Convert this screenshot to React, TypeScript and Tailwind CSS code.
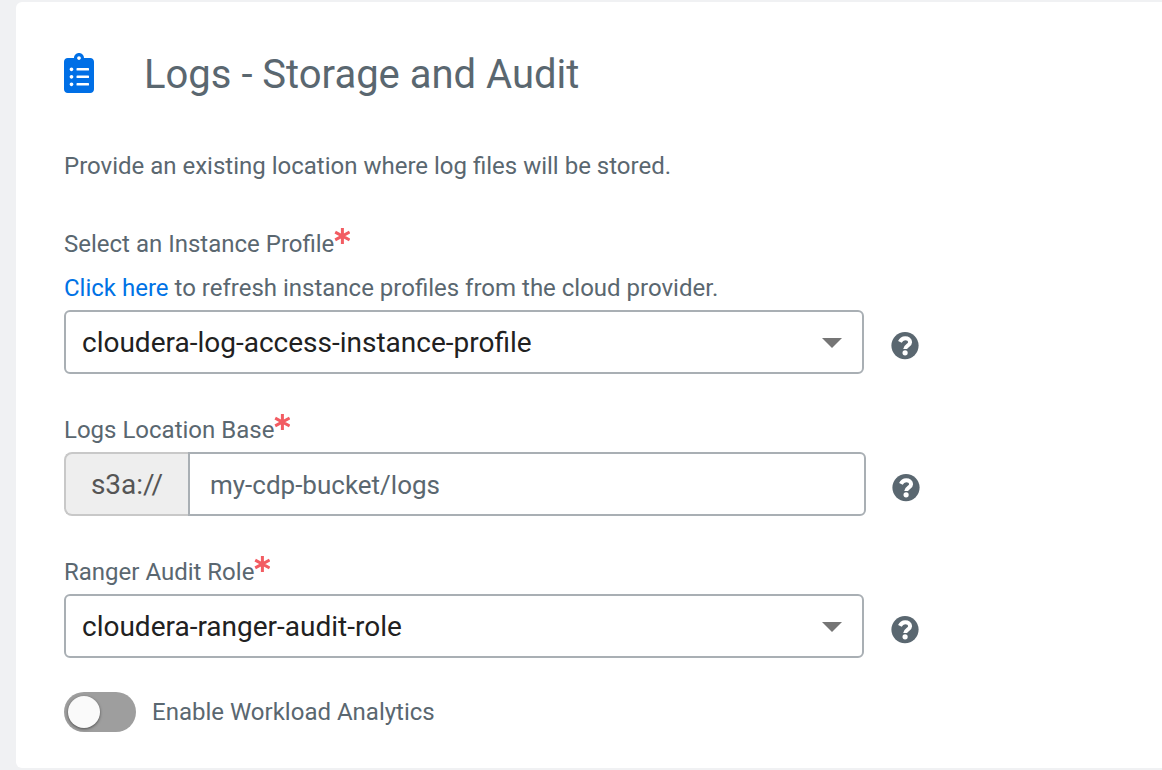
import { FaClipboardList } from 'react-icons/fa';

function Required() {
  return (
    <svg className="h-4 w-4 shrink-0" viewBox="0 0 16 16" fill="none" stroke="#f25c62" strokeWidth="3" role="img" aria-label="required">
      <path d="M8.4 0v16M1.2 4.1l14.4 7.8M1.2 11.9l14.4-7.8" />
    </svg>
  );
}

function Label({ text }: { text: string }) {
  return (
    <div className="flex h-8 items-start text-2xl/8">
      <span>{text}</span>
      <Required />
    </div>
  );
}

function Help() {
  return (
    <svg className="mt-[7px] size-7 shrink-0" viewBox="0 0 28 28" fill="none" role="img" aria-label="help">
      <circle cx="14" cy="13.6" r="13.6" fill="#5a6770" />
      <path d="M8.9 9.9C10 7.5 11.8 6.2 14.2 6.2c2.8 0 4.9 1.5 4.9 4 0 3.4-4.9 3.4-4.9 6.9" stroke="#fff" strokeWidth="4" />
      <circle cx="14.1" cy="20.8" r="2.6" fill="#fff" />
    </svg>
  );
}

function Select({ value }: { value: string }) {
  return (
    <div className="flex items-center gap-[27px]">
      <div className="flex h-16 w-[800px] items-center justify-between rounded-md border-2 border-[#a9afb4] pt-0.5 pr-5 pl-4 text-[28px] text-[#212121]">
        <span>{value}</span>
        <svg className="h-2.5 w-5" viewBox="0 0 20 10" fill="#757575">
          <path d="M0 0h20L10 10z" />
        </svg>
      </div>
      <Help />
    </div>
  );
}

export default function App() {
  return (
    <div className="h-[770px] overflow-hidden bg-[#f0f1f3] pt-0.5 pl-4 font-['Roboto',sans-serif] text-[#5a6770]">
      <main className="h-[766px] rounded-l-md bg-white pt-12 pl-12">
        <header className="flex h-12 items-center gap-[50px]">
          <FaClipboardList className="mb-0.5 h-10 w-[30px] text-[#006fe6]" />
          <h1 className="pt-0.5 text-[40px]/[48px]">Logs - Storage and Audit</h1>
        </header>
        <p className="mt-[52px] text-2xl/8">Provide an existing location where log files will be stored.</p>
        <section className="mt-[46px]">
          <Label text="Select an Instance Profile" />
          <p className="mt-3 mb-1.5 text-2xl/8">
            <a className="text-[#0072e5]" href="#refresh">Click here</a> to refresh instance profiles from the cloud provider.
          </p>
          <Select value="cloudera-log-access-instance-profile" />
        </section>
        <section className="mt-10">
          <Label text="Logs Location Base" />
          <div className="mt-1.5 flex items-center gap-[26px]">
            <div className="flex h-16 w-[802px] text-[28px]">
              <div className="flex w-[124px] items-center justify-center rounded-l-lg border-2 border-r-0 border-[#c8c8c8] bg-[#eeeeee] pt-0.5 text-[#555555]">s3a://</div>
              <div className="flex flex-1 items-center rounded-r-md border-2 border-[#a9afb4] pt-0.5 pl-5 text-[26px]">my-cdp-bucket/logs</div>
            </div>
            <Help />
          </div>
        </section>
        <section className="mt-10">
          <Label text="Ranger Audit Role" />
          <div className="mt-1.5">
            <Select value="cloudera-ranger-audit-role" />
          </div>
        </section>
        <div className="mt-[34px] flex items-center gap-4">
          <div className="flex h-10 w-[72px] items-center rounded-full bg-[#9e9e9e] pl-1" role="switch" aria-checked="false">
            <div className="size-8 rounded-full bg-[#fafafa] shadow-[0_1px_3px_rgba(0,0,0,0.5)]" />
          </div>
          <span className="text-2xl/8">Enable Workload Analytics</span>
        </div>
      </main>
    </div>
  );
}
